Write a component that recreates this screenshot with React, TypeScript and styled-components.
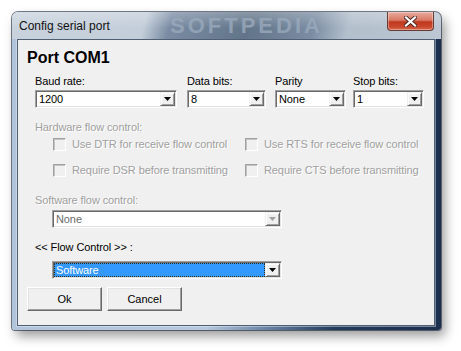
import React from "react";
import styled, { createGlobalStyle } from "styled-components";

const Global = createGlobalStyle`
  html, body { margin: 0; padding: 0; background: #ffffff; }
  body { font-family: "Liberation Sans", Arial, sans-serif; }
`;

const Stage = styled.div`
  width: 461px;
  height: 351px;
  box-sizing: border-box;
  padding: 12px 0 0 12px;
`;

const Window = styled.div`
  width: 429px;
  height: 318px;
  box-sizing: border-box;
  display: flex;
  flex-direction: column;
  padding: 0 6px 4px 5px;
  border-radius: 6px 6px 3px 3px;
  background: linear-gradient(
    to right,
    #b2c4d9 0%,
    #b7c9dd 45%,
    #6580a2 60%,
    #233b5d 75%,
    #1b2f4e 100%
  );
  box-shadow: 0 0 0 1px rgba(25, 35, 55, 0.6), 4px 6px 12px rgba(0, 0, 0, 0.4);
`;

const TitleBar = styled.div`
  position: relative;
  height: 27px;
  margin: 0 -6px 0 -5px;
  padding: 0 7px 0 7px;
  box-sizing: border-box;
  display: flex;
  align-items: flex-start;
  border-radius: 6px 6px 0 0;
  overflow: hidden;
  background:
    linear-gradient(to bottom, rgba(255, 255, 255, 0.25), rgba(255, 255, 255, 0) 60%),
    linear-gradient(
      105deg,
      #c9d3dd 0%,
      #c3ceda 31%,
      #7a8ca3 37%,
      #627589 55%,
      #7b8da3 70%,
      #b2bfcc 78%,
      #bcc7d3 100%
    );
`;

const Watermark = styled.span`
  position: absolute;
  left: 158px;
  top: 2px;
  font-family: "Liberation Sans", Arial, sans-serif;
  font-weight: bold;
  font-size: 22px;
  letter-spacing: 3px;
  line-height: 24px;
  color: #9aa9bc;
  opacity: 0.8;
  pointer-events: none;
`;

const TitleText = styled.span`
  position: relative;
  margin-top: 6px;
  font-family: "Liberation Sans", Arial, sans-serif;
  font-size: 12px;
  line-height: 16px;
  color: #111;
`;

const CloseBtn = styled.div`
  position: relative;
  margin-left: auto;
  width: 47px;
  height: 19px;
  box-sizing: border-box;
  display: flex;
  align-items: center;
  justify-content: center;
  border: 1px solid #6a3a33;
  border-top: none;
  border-radius: 0 0 4px 4px;
  background: linear-gradient(
    to bottom,
    #e9ab9c 0%,
    #d97a66 45%,
    #c0391f 55%,
    #c8452b 80%,
    #d76a4c 100%
  );
  box-shadow: inset 0 0 0 1px rgba(255, 255, 255, 0.35);
`;

const Client = styled.div`
  flex: 1;
  box-sizing: border-box;
  display: flex;
  flex-direction: column;
  background: #f0f0f0;
  border: 1px solid #4f5e70;
  box-shadow: 0 0 0 1px rgba(230, 240, 250, 0.45);
  padding: 9px 9px 0 9px;
`;

const Heading = styled.h1`
  margin: 0;
  font-family: "Liberation Sans", Arial, sans-serif;
  font-size: 16px;
  font-weight: bold;
  line-height: 18px;
  color: #000;
`;

const Body = styled.div`
  display: flex;
  flex-direction: column;
  padding-left: 8px;
`;

const Label = styled.div<{ $disabled?: boolean; $mt?: number }>`
  font-size: 11px;
  line-height: 13px;
  letter-spacing: -0.1px;
  white-space: nowrap;
  margin-top: ${(p) => p.$mt ?? 0}px;
  color: ${(p) => (p.$disabled ? "#a0a0a0" : "#000")};
  text-shadow: ${(p) => (p.$disabled ? "1px 1px 0 #ffffff" : "none")};
`;

const TopRow = styled.div`
  display: grid;
  grid-template-columns: 152px 88px 78px 71px;
  margin-top: 8px;
`;

const Field = styled.div`
  display: flex;
  flex-direction: column;
  gap: 2px;
`;

const Combo = styled.div<{ $w: number; $mt?: number; $indent?: number }>`
  width: ${(p) => p.$w}px;
  height: 18px;
  box-sizing: border-box;
  display: flex;
  margin-top: ${(p) => p.$mt ?? 0}px;
  margin-left: ${(p) => p.$indent ?? 0}px;
  background: #fff;
  border: 1px solid;
  border-color: #a0a0a0 #ffffff #ffffff #a0a0a0;
  box-shadow: inset 1px 1px 0 #696969, inset -1px -1px 0 #e3e3e3;
  padding: 1px;
`;

const ComboText = styled.div<{ $disabled?: boolean; $selected?: boolean }>`
  flex: 1;
  font-size: 11px;
  line-height: 14px;
  letter-spacing: -0.1px;
  padding-left: 2px;
  white-space: nowrap;
  overflow: hidden;
  color: ${(p) => (p.$selected ? "#fff" : p.$disabled ? "#6d6d6d" : "#000")};
  background: ${(p) => (p.$selected ? "#3399ff" : "transparent")};
  outline: ${(p) => (p.$selected ? "1px dotted #3a2a10" : "none")};
  outline-offset: -1px;
`;

const DropBtn = styled.div`
  width: 15px;
  height: 14px;
  box-sizing: border-box;
  display: flex;
  align-items: center;
  justify-content: center;
  background: #f0f0f0;
  border: 1px solid;
  border-color: #f0f0f0 #696969 #696969 #f0f0f0;
  box-shadow: inset 1px 1px 0 #ffffff, inset -1px -1px 0 #a0a0a0;
`;

const Arrow = ({ color = "#000" }: { color?: string }) => (
  <svg width="7" height="4" viewBox="0 0 7 4">
    <polygon points="0,0 7,0 3.5,4" fill={color} />
  </svg>
);

const ComboBox = ({
  w,
  value,
  mt,
  indent,
  disabled,
  selected,
}: {
  w: number;
  value: string;
  mt?: number;
  indent?: number;
  disabled?: boolean;
  selected?: boolean;
}) => (
  <Combo $w={w} $mt={mt} $indent={indent}>
    <ComboText $disabled={disabled} $selected={selected}>
      {value}
    </ComboText>
    <DropBtn>
      <Arrow color={disabled ? "#a0a0a0" : "#000"} />
    </DropBtn>
  </Combo>
);

const CheckGrid = styled.div`
  display: grid;
  grid-template-columns: 192px 1fr;
  row-gap: 8px;
  margin-top: 1px;
  padding-left: 18px;
`;

const CheckRow = styled.div`
  display: flex;
  align-items: center;
  gap: 6px;
  height: 18px;
`;

const CheckBox = styled.span`
  width: 13px;
  height: 13px;
  box-sizing: border-box;
  flex: none;
  background: #f0f0f0;
  border: 1px solid;
  border-color: #a0a0a0 #ffffff #ffffff #a0a0a0;
  box-shadow: inset 1px 1px 0 #c4c4c4;
`;

const ButtonRow = styled.div`
  display: flex;
  gap: 5px;
  margin-top: 8px;
`;

const Button = styled.button`
  width: 75px;
  height: 24px;
  box-sizing: border-box;
  padding: 0;
  font-family: "Liberation Sans", Arial, sans-serif;
  font-size: 11px;
  color: #000;
  background: #f0f0f0;
  border: 1px solid;
  border-color: #ffffff #696969 #696969 #ffffff;
  box-shadow: inset -1px -1px 0 #a0a0a0, inset 1px 1px 0 #e3e3e3;
`;

const checks = [
  "Use DTR for receive flow control",
  "Use RTS for receive flow control",
  "Require DSR before transmitting",
  "Require CTS before transmitting",
];

const top = [
  { label: "Baud rate:", value: "1200", w: 142 },
  { label: "Data bits:", value: "8", w: 79 },
  { label: "Parity", value: "None", w: 71 },
  { label: "Stop bits:", value: "1", w: 71 },
];

export default function App() {
  return (
    <>
      <Global />
      <Stage>
        <Window>
          <TitleBar>
            <Watermark>SOFTPEDIA</Watermark>
            <TitleText>Config serial port</TitleText>
            <CloseBtn>
              <svg width="13" height="11" viewBox="0 0 13 11">
                <path
                  d="M2 1.5 L11 9.5 M11 1.5 L2 9.5"
                  stroke="#4a2a26"
                  strokeWidth="4"
                  strokeLinecap="square"
                />
                <path
                  d="M2 1.5 L11 9.5 M11 1.5 L2 9.5"
                  stroke="#ffffff"
                  strokeWidth="2.2"
                  strokeLinecap="square"
                />
              </svg>
            </CloseBtn>
          </TitleBar>
          <Client>
            <Heading>Port COM1</Heading>
            <Body>
              <TopRow>
                {top.map((f) => (
                  <Field key={f.label}>
                    <Label>{f.label}</Label>
                    <ComboBox w={f.w} value={f.value} />
                  </Field>
                ))}
              </TopRow>
              <Label $disabled $mt={13}>
                Hardware flow control:
              </Label>
              <CheckGrid>
                {checks.map((c) => (
                  <CheckRow key={c}>
                    <CheckBox />
                    <Label $disabled>{c}</Label>
                  </CheckRow>
                ))}
              </CheckGrid>
              <Label $disabled $mt={15}>
                Software flow control:
              </Label>
              <ComboBox w={230} value="None" mt={3} indent={17} disabled />
              <Label $mt={13}>&lt;&lt; Flow Control &gt;&gt; :</Label>
              <ComboBox w={230} value="Software" mt={7} indent={17} selected />
            </Body>
            <ButtonRow>
              <Button>Ok</Button>
              <Button>Cancel</Button>
            </ButtonRow>
          </Client>
        </Window>
      </Stage>
    </>
  );
}
